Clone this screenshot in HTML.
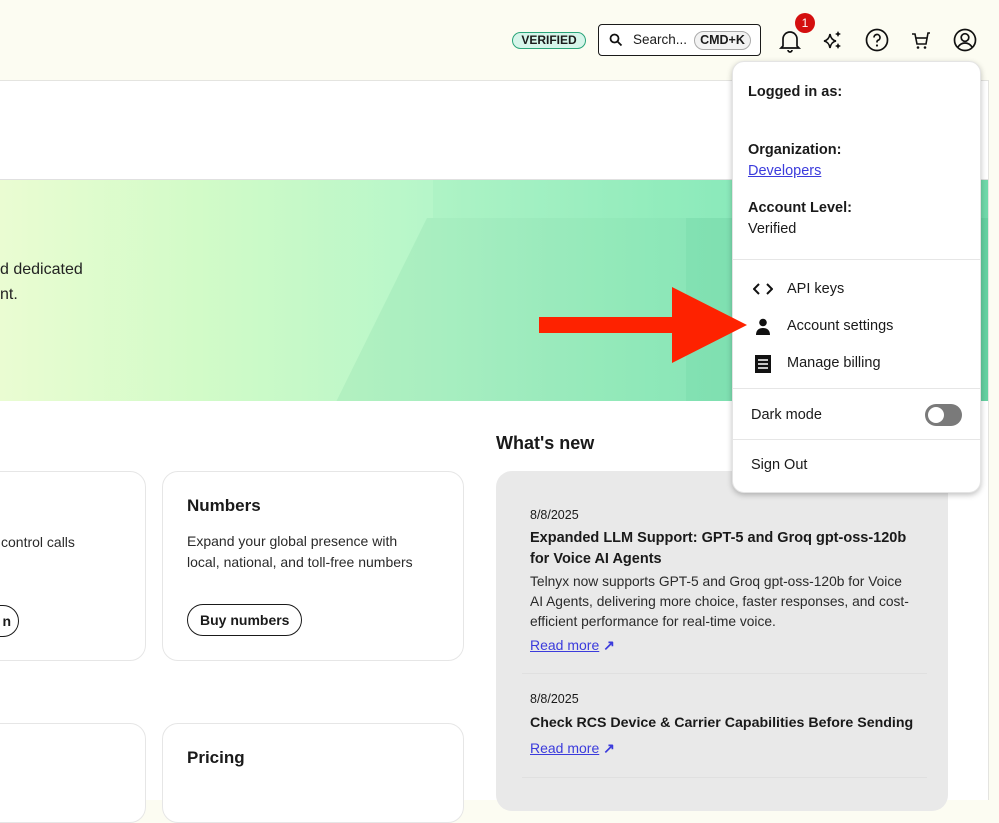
<!DOCTYPE html>
<html><head><meta charset="utf-8"><style>
*{box-sizing:border-box;margin:0;padding:0}
body{width:999px;height:788px;overflow:hidden;background:#fcfcf2;font-family:"Liberation Sans",sans-serif;color:#1a1a1a;position:relative}
.abs{position:absolute}
.main{left:0;top:80px;width:989px;height:720px;background:#fff;border-top:1px solid #e4e4e0;border-right:1px solid #e4e4e0}
.banner{left:0;top:179px;width:988px;height:222px;background:linear-gradient(90deg,#eafcd2 0%,#d2fbc8 20%,#b4f6c9 45%,#98efc0 65%,#86e9bc 80%,#6fd9aa 100%);overflow:hidden;border-top:1px solid #e0e0e0}
.card{background:#fff;border:1px solid #e6e6e6;border-radius:16px}
.h{font-size:17px;font-weight:bold}
.p{font-size:14px;line-height:21px;color:#2a2a2a}
.btn{border:1.5px solid #1a1a1a;border-radius:16px;height:32px;font-size:14px;font-weight:bold;padding:0 12px;display:flex;align-items:center}
.dd{left:732px;top:61px;width:249px;height:432px;background:#fff;border-radius:12px;box-shadow:0 2px 6px rgba(0,0,0,.25);border:1px solid #e4e4e4}
.dd .t{position:absolute;font-size:14.5px}
.sep{position:absolute;left:0;width:100%;height:1px;background:#e6e6e6}
a{color:#3b3bdc;text-decoration:underline}
.ar{color:#3b3bdc;font-weight:bold}
</style></head><body>
<div class="abs main"></div>
<div class="abs banner">
 <div class="abs" style="left:433px;top:0;width:560px;height:38px;background:rgba(120,220,170,.12)"></div>
 <div class="abs" style="left:336px;top:38px;width:350px;height:184px;background:rgba(90,190,140,.14);clip-path:polygon(26% 0,100% 0,100% 100%,0 100%)"></div>
 <div class="abs" style="left:686px;top:38px;width:310px;height:184px;background:rgba(60,170,120,.18)"></div>
 <div class="abs" style="left:0;top:77px;font-size:16px;line-height:25px;color:#222">d dedicated<br>nt.</div>
</div>
<!-- top bar -->
<div class="abs" style="left:512px;top:32px;width:74px;height:17px;border:1.5px solid #2aa57a;background:#d6f5ea;border-radius:9px;font-size:12px;font-weight:bold;text-align:center;line-height:14px">VERIFIED</div>
<div class="abs" style="left:598px;top:24px;width:163px;height:32px;border:1.5px solid #1a1a1a;border-radius:4px;background:#fff">
 <svg class="abs" style="left:10px;top:8px" width="14" height="14" viewBox="0 0 14 14"><circle cx="5.5" cy="5.5" r="4" fill="none" stroke="#111" stroke-width="1.8"/><path d="M8.5 8.5L12.5 12.5" stroke="#111" stroke-width="1.8"/></svg>
 <span class="abs" style="left:34px;top:7px;font-size:13.5px">Search...</span>
 <span class="abs" style="left:95px;top:6px;width:57px;height:19px;border:1px solid #aaa;border-radius:10px;background:#f2f2f2;font-size:12.5px;font-weight:bold;text-align:center;line-height:17px">CMD+K</span>
</div>
<svg class="abs" style="left:778px;top:28px" width="24" height="26" viewBox="0 0 24 26"><path d="M5 18V11a7 7 0 0 1 14 0v7l2 2H3z" fill="none" stroke="#111" stroke-width="1.7"/><path d="M10 22a2 2 0 0 0 4 0" fill="none" stroke="#111" stroke-width="1.7"/></svg>
<div class="abs" style="left:795px;top:13px;width:20px;height:20px;border-radius:50%;background:#d40f0f;color:#fff;font-size:12px;text-align:center;line-height:20px">1</div>
<svg class="abs" style="left:822px;top:30px" width="22" height="20" viewBox="0 0 22 20"><path d="M8 4Q9 10 14 11Q9 12 8 18Q7 12 2 11Q7 10 8 4Z" fill="none" stroke="#111" stroke-width="1.6"/><path d="M16 1l1 2 2 1-2 1-1 2-1-2-2-1 2-1z M16 13l1 2 2 1-2 1-1 2-1-2-2-1 2-1z" fill="#111"/></svg>
<svg class="abs" style="left:865px;top:28px" width="24" height="24" viewBox="0 0 24 24"><circle cx="12" cy="12" r="10.5" fill="none" stroke="#111" stroke-width="1.7"/><path d="M9 9.5a3 3 0 1 1 4 2.8c-.8.4-1 1-1 1.7v.5" fill="none" stroke="#111" stroke-width="1.7"/><circle cx="12" cy="17.5" r="1.1" fill="#111"/></svg>
<svg class="abs" style="left:910px;top:29px" width="22" height="22" viewBox="0 0 22 22"><path d="M2 5h3l2 10h9l2-11h2" fill="none" stroke="#111" stroke-width="1.6"/><path d="M6 9h11" stroke="#111" stroke-width="1.6"/><circle cx="8" cy="18.5" r="1.3" fill="#111"/><circle cx="15" cy="18.5" r="1.3" fill="#111"/></svg>
<svg class="abs" style="left:953px;top:28px" width="24" height="24" viewBox="0 0 24 24"><circle cx="12" cy="12" r="10.5" fill="none" stroke="#111" stroke-width="1.7"/><circle cx="12" cy="9.5" r="3.8" fill="none" stroke="#111" stroke-width="1.7"/><path d="M5 19c2-3 4.5-4 7-4s5 1 7 4" fill="none" stroke="#111" stroke-width="1.7"/></svg>
<!-- cards -->
<div class="abs card" style="left:-20px;top:471px;width:166px;height:190px"><span class="abs p" style="left:20px;top:60px">control calls</span><span class="abs btn" style="left:-10px;top:133px;width:48px;justify-content:flex-end;padding-right:7px">n</span></div>
<div class="abs card" style="left:162px;top:471px;width:302px;height:190px">
 <div class="abs h" style="left:24px;top:24px">Numbers</div>
 <div class="abs p" style="left:24px;top:59px;width:240px">Expand your global presence with local, national, and toll-free numbers</div>
 <div class="abs btn" style="left:24px;top:132px">Buy numbers</div>
</div>
<div class="abs card" style="left:-20px;top:723px;width:166px;height:100px"></div>
<div class="abs card" style="left:162px;top:723px;width:302px;height:100px"><div class="abs h" style="left:24px;top:24px">Pricing</div></div>
<div class="abs" style="left:496px;top:433px;font-size:18px;font-weight:bold">What's new</div>
<div class="abs" style="left:496px;top:471px;width:452px;height:340px;background:#e9e9e9;border-radius:16px">
 <div class="abs" style="left:34px;top:37px;font-size:12.5px">8/8/2025</div>
 <div class="abs" style="left:34px;top:57px;width:385px;font-size:14.5px;font-weight:bold;line-height:21px">Expanded LLM Support: GPT-5 and Groq gpt-oss-120b for Voice AI Agents</div>
 <div class="abs" style="left:34px;top:101px;width:385px;font-size:13.8px;line-height:20px;color:#2a2a2a">Telnyx now supports GPT-5 and Groq gpt-oss-120b for Voice AI Agents, delivering more choice, faster responses, and cost-efficient performance for real-time voice.</div>
 <div class="abs" style="left:34px;top:166px;font-size:14px"><a>Read more</a> <span class="ar">↗</span></div>
 <div class="abs" style="left:26px;top:202px;width:405px;height:1px;background:#e0e0e0"></div>
 <div class="abs" style="left:34px;top:221px;font-size:12.5px">8/8/2025</div>
 <div class="abs" style="left:34px;top:244px;font-size:14.2px;font-weight:bold">Check RCS Device &amp; Carrier Capabilities Before Sending</div>
 <div class="abs" style="left:34px;top:269px;font-size:14px"><a>Read more</a> <span class="ar">↗</span></div>
 <div class="abs" style="left:26px;top:306px;width:405px;height:1px;background:#e0e0e0"></div>
</div>
<!-- dropdown -->
<div class="abs dd">
 <div class="t" style="left:15px;top:22px;font-weight:bold">Logged in as:</div>
 <div class="t" style="left:15px;top:80px;font-weight:bold">Organization:</div>
 <div class="t" style="left:15px;top:101px"><a>Developers</a></div>
 <div class="t" style="left:15px;top:138px;font-weight:bold">Account Level:</div>
 <div class="t" style="left:15px;top:159px">Verified</div>
 <div class="sep" style="top:197px"></div>
 <svg class="abs" style="left:20px;top:220px" width="20" height="14" viewBox="0 0 20 14"><path d="M6 2L1 7l5 5M14 2l5 5-5 5" fill="none" stroke="#111" stroke-width="2"/></svg>
 <div class="t" style="left:54px;top:219px">API keys</div>
 <svg class="abs" style="left:22px;top:256px" width="16" height="17" viewBox="0 0 16 17"><circle cx="8" cy="4.5" r="3.8" fill="#111"/><path d="M1 17c0-5 3-7 7-7s7 2 7 7z" fill="#111"/></svg>
 <div class="t" style="left:54px;top:256px">Account settings</div>
 <svg class="abs" style="left:21px;top:292px" width="18" height="20" viewBox="0 0 18 20"><rect x="1" y="1" width="16" height="18" fill="#111"/><path d="M4 6h10M4 10h10M4 14h10" stroke="#fff" stroke-width="1.6"/></svg>
 <div class="t" style="left:54px;top:293px">Manage billing</div>
 <div class="sep" style="top:326px"></div>
 <div class="t" style="left:18px;top:345px">Dark mode</div>
 <div class="abs" style="left:192px;top:342px;width:37px;height:22px;border-radius:11px;background:#7a7a7a"><div class="abs" style="left:3px;top:3px;width:16px;height:16px;border-radius:50%;background:#fff"></div></div>
 <div class="sep" style="top:377px"></div>
 <div class="t" style="left:18px;top:395px">Sign Out</div>
</div>
<!-- arrow -->
<svg class="abs" style="left:539px;top:287px" width="210" height="76" viewBox="0 0 210 76"><path d="M0 30H133V0L208 38L133 76V46H0Z" fill="#fe2200"/></svg>
</body></html>
